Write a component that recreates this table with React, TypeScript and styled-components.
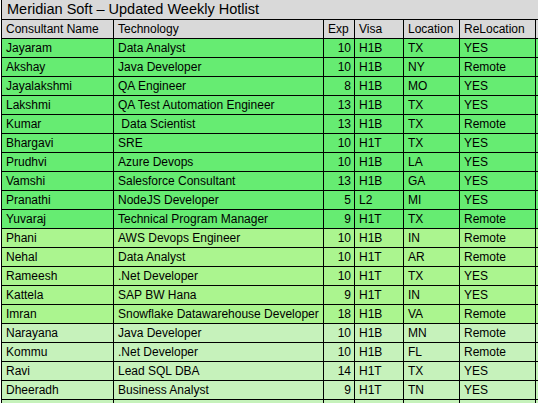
import * as React from 'react';
import styled, { createGlobalStyle } from 'styled-components';

type Band = 'strong' | 'mid' | 'soft';

interface Candidate {
  name: string;
  tech: string;
  exp: number;
  visa: string;
  location: string;
  relocation: string;
  band: Band;
}

const candidates: Candidate[] = [
  { name: 'Jayaram', tech: 'Data Analyst', exp: 10, visa: 'H1B', location: 'TX', relocation: 'YES', band: 'strong' },
  { name: 'Akshay', tech: 'Java Developer', exp: 10, visa: 'H1B', location: 'NY', relocation: 'Remote', band: 'strong' },
  { name: 'Jayalakshmi', tech: 'QA Engineer', exp: 8, visa: 'H1B', location: 'MO', relocation: 'YES', band: 'strong' },
  { name: 'Lakshmi', tech: 'QA Test Automation Engineer', exp: 13, visa: 'H1B', location: 'TX', relocation: 'YES', band: 'strong' },
  { name: 'Kumar', tech: ' Data Scientist', exp: 13, visa: 'H1B', location: 'TX', relocation: 'Remote', band: 'strong' },
  { name: 'Bhargavi', tech: 'SRE', exp: 10, visa: 'H1T', location: 'TX', relocation: 'YES', band: 'strong' },
  { name: 'Prudhvi', tech: 'Azure Devops', exp: 10, visa: 'H1B', location: 'LA', relocation: 'YES', band: 'strong' },
  { name: 'Vamshi', tech: 'Salesforce Consultant', exp: 13, visa: 'H1B', location: 'GA', relocation: 'YES', band: 'strong' },
  { name: 'Pranathi', tech: 'NodeJS Developer', exp: 5, visa: 'L2', location: 'MI', relocation: 'YES', band: 'strong' },
  { name: 'Yuvaraj', tech: 'Technical Program Manager', exp: 9, visa: 'H1T', location: 'TX', relocation: 'Remote', band: 'strong' },
  { name: 'Phani', tech: 'AWS Devops Engineer', exp: 10, visa: 'H1B', location: 'IN', relocation: 'Remote', band: 'mid' },
  { name: 'Nehal', tech: 'Data Analyst', exp: 10, visa: 'H1T', location: 'AR', relocation: 'Remote', band: 'mid' },
  { name: 'Rameesh', tech: '.Net Developer', exp: 10, visa: 'H1T', location: 'TX', relocation: 'YES', band: 'mid' },
  { name: 'Kattela', tech: 'SAP BW Hana', exp: 9, visa: 'H1T', location: 'IN', relocation: 'YES', band: 'mid' },
  { name: 'Imran', tech: 'Snowflake Datawarehouse Developer', exp: 18, visa: 'H1B', location: 'VA', relocation: 'Remote', band: 'mid' },
  { name: 'Narayana', tech: 'Java Developer', exp: 10, visa: 'H1B', location: 'MN', relocation: 'Remote', band: 'soft' },
  { name: 'Kommu', tech: '.Net Developer', exp: 10, visa: 'H1B', location: 'FL', relocation: 'Remote', band: 'soft' },
  { name: 'Ravi', tech: 'Lead SQL DBA', exp: 14, visa: 'H1T', location: 'TX', relocation: 'YES', band: 'soft' },
  { name: 'Dheeradh', tech: 'Business Analyst', exp: 9, visa: 'H1T', location: 'TN', relocation: 'YES', band: 'soft' },
];

const bandColors: Record<Band, string> = {
  strong: '#66ec72',
  mid: '#abf58f',
  soft: '#c6f2bb',
};

const columnWidths = [112, 210, 31, 49, 56, 76, 40];

export default function App(): React.ReactElement {
  return (
    <>
      <GlobalStyle />
      <Sheet>
        <colgroup>
          {columnWidths.map((w, i) => (
            <col key={i} style={{ width: w }} />
          ))}
        </colgroup>
        <tbody>
          <TitleRow>
            <TitleCell colSpan={7}>Meridian Soft – Updated Weekly Hotlist</TitleCell>
          </TitleRow>
          <HeaderRow>
            <Cell>Consultant Name</Cell>
            <Cell>Technology</Cell>
            <Cell>Exp</Cell>
            <Cell>Visa</Cell>
            <Cell>Location</Cell>
            <Cell>ReLocation</Cell>
            <BlankCell />
          </HeaderRow>
          {candidates.map((c) => (
            <DataRow key={c.name} $band={c.band}>
              <Cell>{c.name}</Cell>
              <Cell>{c.tech}</Cell>
              <NumberCell>{c.exp}</NumberCell>
              <Cell>{c.visa}</Cell>
              <Cell>{c.location}</Cell>
              <Cell>{c.relocation}</Cell>
              <BlankCell />
            </DataRow>
          ))}
          <DataRow $band="soft">
            <Cell />
            <Cell />
            <NumberCell />
            <Cell />
            <Cell />
            <Cell />
            <BlankCell />
          </DataRow>
        </tbody>
      </Sheet>
    </>
  );
}

const GlobalStyle = createGlobalStyle`
  html, body {
    margin: 0;
    padding: 0;
    background: #ffffff;
    overflow: hidden;
  }
  body {
    font-family: "Liberation Sans", Arial, sans-serif;
    color: #000000;
  }
`;

const Sheet = styled.table`
  border-collapse: collapse;
  table-layout: fixed;
  width: 574px;
  margin-left: 1px;
  font-family: "Liberation Sans", Arial, sans-serif;
  font-size: 12px;
  color: #000000;
`;

const TitleRow = styled.tr`
  height: 19px;
  background: #d9d9d9;
`;

const TitleCell = styled.td`
  height: 18px;
  padding: 0 0 0 5px;
  border-left: 1px solid #000000;
  border-bottom: 1px solid #000000;
  font-size: 14.5px;
  line-height: 18px;
  white-space: nowrap;
`;

const HeaderRow = styled.tr`
  height: 19px;
  background: #d9d9d9;
`;

const DataRow = styled.tr<{ $band: Band }>`
  height: 19px;
  background: ${({ $band }) => bandColors[$band]};
`;

const Cell = styled.td`
  height: 18px;
  padding: 0 0 0 4px;
  border: 1px solid #000000;
  line-height: 18px;
  white-space: pre;
  overflow: hidden;
`;

const NumberCell = styled(Cell)`
  padding: 0 3px 0 0;
  text-align: right;
`;

const BlankCell = styled(Cell)`
  border-right: none;
`;
